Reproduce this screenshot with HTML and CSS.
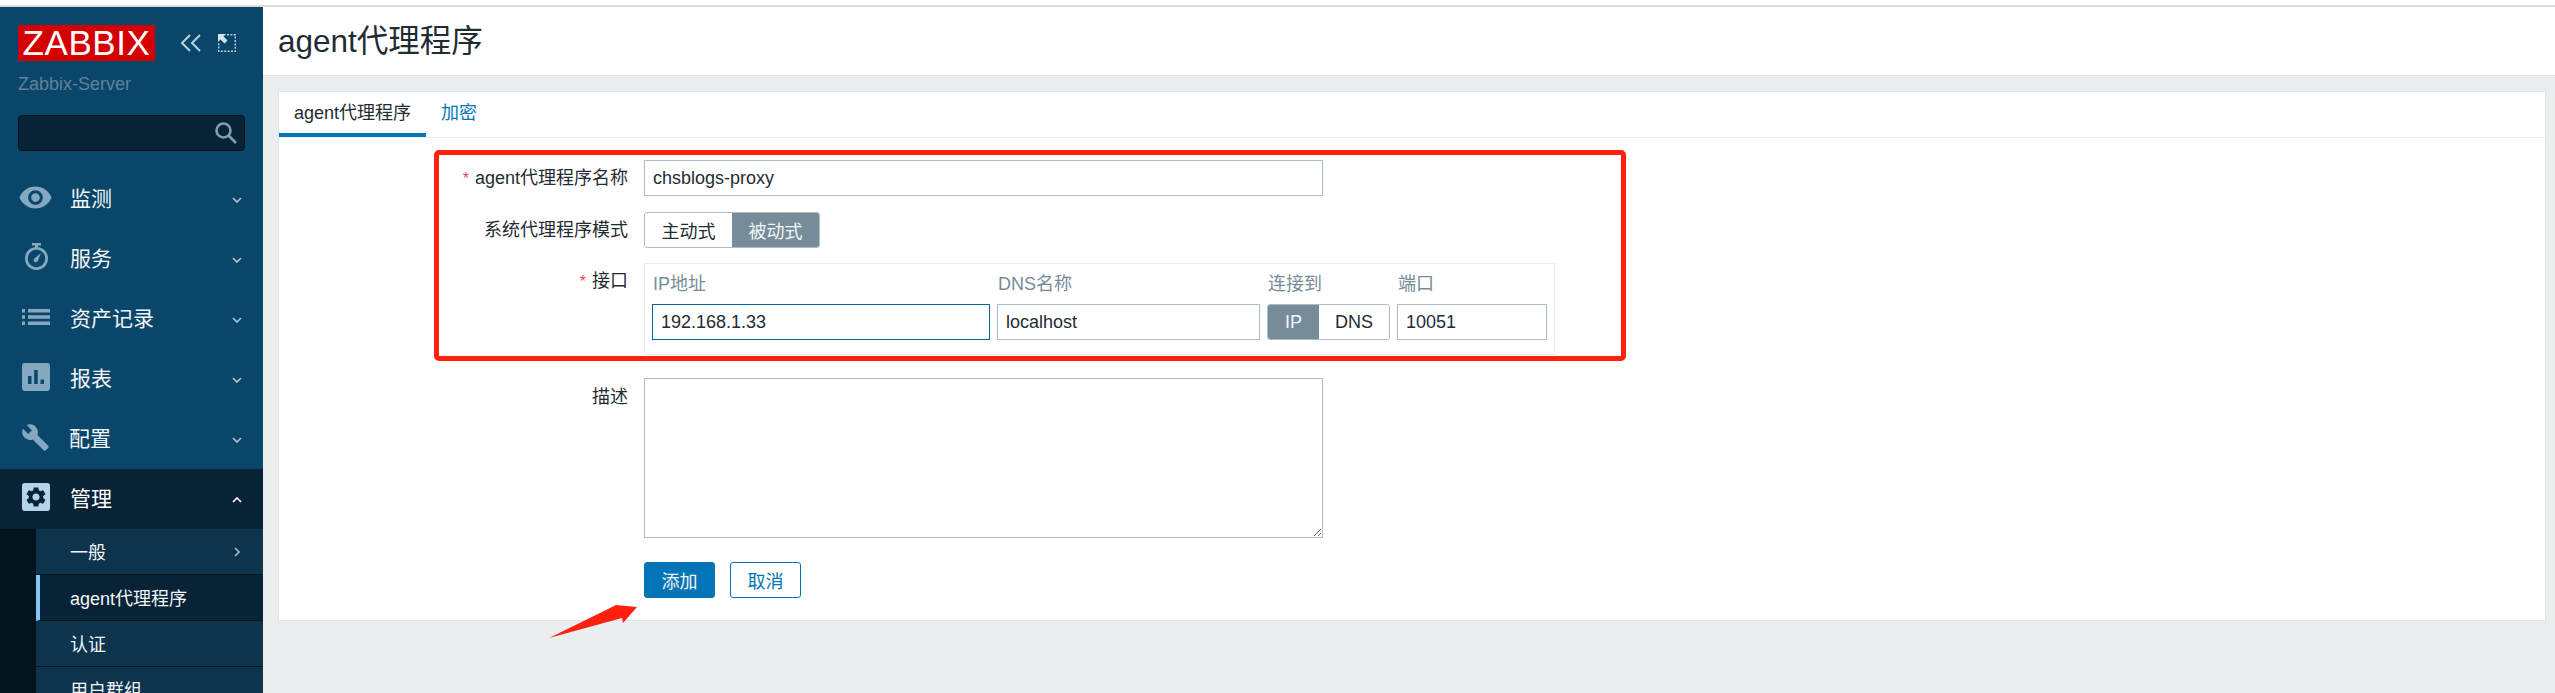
FILE: index.html
```html
<!DOCTYPE html>
<html lang="zh">
<head>
  <meta charset="UTF-8" />
  <title>agent代理程序</title>
  <link rel="stylesheet" href="styles.css">
</head>
<body>
  <div class="topline"></div>
  <div class="layout">

    <aside class="sidebar">
      <div class="brand">
        <span class="logo">ZABBIX</span>
        <svg class="brand-btn collapse" viewBox="0 0 22 18"><path d="M10 1 2 9l8 8M20 1l-8 8 8 8"/></svg>
        <svg class="brand-btn expand" viewBox="0 0 18 18">
          <path class="dots" d="M9 .7h8.300v16.600H.7V9"/>
          <path class="solid" d="M0 0h8L5.500 2.500 9.500 6.500 6.500 9.500 2.500 5.500 0 8z"/>
        </svg>
      </div>
      <div class="server">Zabbix-Server</div>
      <div class="search">
        <svg viewBox="0 0 22 22"><circle cx="8.500" cy="8.500" r="7"/><path d="m13.500 13.500 7.500 7.500"/></svg>
      </div>

      <nav class="menu">
        <a class="menu-item">
          <svg class="icon icon-eye" viewBox="0 0 24 24"><path d="M12 4.500C7 4.500 2.730 7.610 1 12c1.730 4.390 6 7.500 11 7.500s9.270-3.110 11-7.500c-1.730-4.390-6-7.500-11-7.500zM12 17c-2.760 0-5-2.240-5-5s2.240-5 5-5 5 2.240 5 5-2.240 5-5 5zm0-8c-1.660 0-3 1.340-3 3s1.340 3 3 3 3-1.340 3-3-1.340-3-3-3z"/></svg>
          <span>监测</span>
          <svg class="chev" viewBox="0 0 10 6"><path d="m1 1 4 4 4-4"/></svg>
        </a>
        <a class="menu-item">
          <svg class="icon" viewBox="0 0 28 28">
            <path d="M10 0h9v2.500h-3V5h-3V2.500h-3z"/>
            <path fill-rule="evenodd" d="M14.500 4C21 4 26 9 26 15.500S21 27 14.500 27 3 22 3 15.500 8 4 14.500 4zm0 2.800c-4.800 0-8.700 3.900-8.700 8.700s3.900 8.700 8.700 8.700 8.700-3.900 8.700-8.700-3.900-8.700-8.700-8.700z"/>
            <path d="m19 10-3 7.500a2.200 2.200 0 1 1-3-2.500z"/>
          </svg>
          <span>服务</span>
          <svg class="chev" viewBox="0 0 10 6"><path d="m1 1 4 4 4-4"/></svg>
        </a>
        <a class="menu-item">
          <svg class="icon icon-list" viewBox="0 0 28 16"><path d="M0 0h3v3.500H0zM6 0h22v3.500H6zM0 6.250h3v3.500H0zM6 6.250h22v3.500H6zM0 12.500h3V16H0zM6 12.500h22V16H6z"/></svg>
          <span>资产记录</span>
          <svg class="chev" viewBox="0 0 10 6"><path d="m1 1 4 4 4-4"/></svg>
        </a>
        <a class="menu-item">
          <svg class="icon" viewBox="0 0 28 28"><path fill-rule="evenodd" d="M3 0h22a3 3 0 0 1 3 3v22a3 3 0 0 1-3 3H3a3 3 0 0 1-3-3V3a3 3 0 0 1 3-3zm3 13v8h3.500v-8zm6.200-6v14h3.500V7zm6.300 9.500V21H22v-4.500z"/></svg>
          <span>报表</span>
          <svg class="chev" viewBox="0 0 10 6"><path d="m1 1 4 4 4-4"/></svg>
        </a>
        <a class="menu-item">
          <svg class="icon icon-wrench" viewBox="0 0 24 24"><path d="M22.700 19l-9.100-9.100c.9-2.300.4-5-1.500-6.900-2-2-5-2.400-7.400-1.300L9 6 6 9 1.600 4.700C.4 7.100.9 10.100 2.900 12.100c1.900 1.900 4.600 2.400 6.900 1.500l9.100 9.100c.4.4 1 .4 1.400 0l2.300-2.300c.5-.4.5-1.100.1-1.400z"/></svg>
          <span>配置</span>
          <svg class="chev" viewBox="0 0 10 6"><path d="m1 1 4 4 4-4"/></svg>
        </a>
        <a class="menu-item open">
          <span class="gear-box">
            <svg viewBox="0 0 24 24"><path d="M19.140 12.940c.04-.3.06-.61.06-.94 0-.32-.02-.64-.07-.94l2.030-1.580c.18-.14.23-.41.12-.61l-1.920-3.320c-.12-.22-.37-.29-.59-.22l-2.390.96c-.5-.38-1.030-.7-1.620-.94l-.36-2.540c-.04-.24-.24-.41-.48-.41h-3.840c-.24 0-.43.17-.47.41l-.36 2.540c-.59.24-1.130.57-1.620.94l-2.390-.96c-.22-.08-.47 0-.59.22L2.740 8.870c-.12.21-.08.47.12.61l2.030 1.580c-.05.3-.09.63-.09.94s.02.64.07.94l-2.030 1.580c-.18.14-.23.41-.12.61l1.920 3.320c.12.22.37.29.59.22l2.390-.96c.5.38 1.030.7 1.620.94l.36 2.540c.05.24.24.41.48.41h3.840c.24 0 .44-.17.47-.41l.36-2.540c.59-.24 1.130-.56 1.620-.94l2.390.96c.22.08.47 0 .59-.22l1.920-3.320c.12-.22.07-.47-.12-.61l-2.010-1.580zM12 15.600c-1.980 0-3.600-1.620-3.600-3.600s1.620-3.600 3.600-3.600 3.600 1.620 3.600 3.600-1.620 3.600-3.600 3.600z"/></svg>
          </span>
          <span>管理</span>
          <svg class="chev" viewBox="0 0 10 6"><path d="m1 5 4-4 4 4"/></svg>
        </a>
        <div class="submenu">
          <a class="sub-item">一般
            <svg class="chev-right" viewBox="0 0 6 10"><path d="m1 1 4 4-4 4"/></svg>
          </a>
          <a class="sub-item active">agent代理程序</a>
          <a class="sub-item">认证</a>
          <a class="sub-item">用户群组</a>
        </div>
      </nav>
    </aside>

    <main class="main">
      <header class="page-head">
        <h1>agent代理程序</h1>
      </header>

      <section class="card">
        <div class="tabs">
          <a class="tab active">agent代理程序</a>
          <a class="tab">加密</a>
        </div>

        <form class="form">
          <label class="required">agent代理程序名称</label>
          <input class="field wide" type="text" value="chsblogs-proxy">

          <label>系统代理程序模式</label>
          <div class="toggle mode">
            <span class="opt">主动式</span>
            <span class="opt on">被动式</span>
          </div>

          <label class="required">接口</label>
          <div class="iface">
            <span class="iface-head">IP地址</span>
            <span class="iface-head">DNS名称</span>
            <span class="iface-head">连接到</span>
            <span class="iface-head">端口</span>
            <input class="field focus" type="text" value="192.168.1.33">
            <input class="field" type="text" value="localhost">
            <div class="toggle conn">
              <span class="opt on">IP</span>
              <span class="opt">DNS</span>
            </div>
            <input class="field" type="text" value="10051">
          </div>

          <label class="desc-label">描述</label>
          <textarea class="field wide desc"></textarea>

          <span></span>
          <div class="actions">
            <button type="button" class="btn primary">添加</button>
            <button type="button" class="btn">取消</button>
          </div>
        </form>
      </section>

      <div class="mark-box"></div>
      <svg class="mark-arrow" viewBox="0 0 100 45"><path d="M9 38 66 10 76 5 97 7 83 23 82 18z"/></svg>
    </main>

  </div>
</body>
</html>
```

FILE: styles.css
```css
* {
  box-sizing: border-box;
}

html, body {
  height: 100%;
  margin: 0;
  overflow: hidden;
}

body {
  display: flex;
  flex-direction: column;
  font-family: "Liberation Sans", "Noto Sans CJK SC", sans-serif;
  font-size: 18px;
  color: #1f2c33;
  background: #fff;
}

.topline {
  flex: none;
  height: 7px;
  border-bottom: 2px solid #dcdcdc;
}

.layout {
  flex: 1;
  display: flex;
  min-height: 0;
}

/* sidebar */
.sidebar {
  flex: none;
  width: 263px;
  background: #0a466a;
  overflow: hidden;
}

.brand {
  display: flex;
  align-items: center;
  padding: 18px 0 0 18px;
}

.logo {
  width: 137px;
  height: 36px;
  background: #d40000;
  color: #fff;
  font-size: 35px;
  line-height: 36px;
  letter-spacing: 0.6px;
  text-align: center;
}

.brand-btn {
  height: 18px;
  fill: none;
}

.collapse {
  width: 22px;
  margin-left: 25px;
  stroke: #bcd0dd;
  stroke-width: 2;
}

.expand {
  width: 18px;
  margin-left: 16px;
}

.expand .dots {
  fill: none;
  stroke: #bcd0dd;
  stroke-width: 1.4;
  stroke-dasharray: 2 1.400;
}

.expand .solid {
  fill: #d5e2ea;
}

.server {
  margin: 12px 0 0 18px;
  line-height: 22px;
  color: #5f8299;
}

.search {
  display: flex;
  align-items: center;
  justify-content: flex-end;
  width: 227px;
  height: 36px;
  margin: 20px 0 0 18px;
  padding-right: 7px;
  background: #082336;
  border: 1px solid #03121d;
  border-radius: 4px;
}

.search svg {
  width: 22px;
  height: 22px;
  fill: none;
  stroke: #7e9fb3;
  stroke-width: 2.6;
}

.menu {
  margin-top: 18px;
}

.menu-item {
  display: flex;
  align-items: center;
  height: 60px;
  padding: 0 0 4px 20px;
  font-size: 21px;
  color: #f2f5f7;
}

.menu-item .icon {
  flex: none;
  width: 28px;
  height: 28px;
  margin: 0 20px 0 2px;
  fill: #84a8c0;
}

.menu-item .icon-eye {
  width: 35px;
  height: 35px;
  margin: 0 17px 0 -2px;
}

.menu-item .icon-list {
  height: 16px;
}

.menu-item .icon-wrench {
  width: 29px;
  height: 29px;
  margin: 0 19px 0 1px;
}

.menu-item .chev {
  width: 10px;
  height: 6px;
  margin: 6px 21px 0 auto;
  fill: none;
  stroke: #aac2d1;
  stroke-width: 1.700;
}

.menu-item.open {
  background: #082336;
  color: #fff;
}

.menu-item.open .chev {
  stroke: #fff;
}

.gear-box {
  flex: none;
  display: flex;
  align-items: center;
  justify-content: center;
  width: 28px;
  height: 28px;
  margin: 0 20px 0 2px;
  background: #b3d3ea;
  border-radius: 3px;
}

.gear-box svg {
  width: 24px;
  height: 24px;
  fill: #082336;
}

.submenu {
  padding-left: 36px;
  background: #03141f;
}

.sub-item {
  display: flex;
  align-items: center;
  height: 46px;
  padding: 0 0 2px 34px;
  background: #0d334d;
  border-bottom: 1px solid #04161f;
  color: #f2f5f7;
}

.sub-item.active {
  padding-left: 30px;
  background: #082336;
  border-left: 4px solid #82c6f8;
}

.chev-right {
  width: 6px;
  height: 10px;
  margin: 2px 23px 0 auto;
  fill: none;
  stroke: #a3b7c4;
  stroke-width: 1.700;
}

/* page */
.main {
  position: relative;
  flex: 1;
  min-width: 0;
  display: flex;
  flex-direction: column;
  background: #ebeef0;
}

.page-head {
  flex: none;
  height: 69px;
  padding: 0 15px;
  background: #fff;
  border-bottom: 1px solid #dfe4e7;
}

h1 {
  margin: 0;
  font-size: 31.500px;
  font-weight: normal;
  line-height: 68px;
}

.card {
  margin: 15px 9px 0 15px;
  background: #fff;
  border: 1px solid #dfe4e7;
}

.tabs {
  display: flex;
  height: 46px;
  border-bottom: 1px solid #ebeef0;
}

.tab {
  height: 45px;
  padding: 0 15px;
  line-height: 43px;
  color: #0275b8;
}

.tab.active {
  color: #1f2c33;
  border-bottom: 4px solid #0275b8;
}

.form {
  display: grid;
  grid-template-columns: 349px 1fr;
  column-gap: 16px;
  row-gap: 15px;
  padding: 22px 0 22px;
}

.form > label {
  line-height: 36px;
  text-align: right;
}

.form > .desc-label {
  margin-top: 9px;
}

.required::before {
  content: "*";
  margin-right: 6px;
  color: #e8504a;
  font-size: 16px;
}

.field {
  height: 36px;
  min-width: 0;
  padding: 0 8px;
  background: #fff;
  border: 1px solid #acbbc5;
  border-radius: 0;
  font: inherit;
  color: #1f2c33;
  outline: none;
}

.field.wide {
  width: 679px;
}

.field.focus {
  border-color: #00689f;
}

.desc {
  display: block;
  height: 160px;
  margin-top: 8px;
}

.toggle {
  display: flex;
  height: 36px;
  background: #fff;
  border: 1px solid #acbbc5;
  border-radius: 3px;
  overflow: hidden;
}

.mode {
  width: 176px;
}

.opt {
  display: flex;
  align-items: center;
  justify-content: center;
  flex: 1;
}

.opt.on {
  background: #768d99;
  color: #f2f5f7;
}

.conn .opt:first-child {
  flex: none;
  width: 51px;
}

.iface {
  display: grid;
  grid-template-columns: 338px 263px 123px 150px;
  column-gap: 7px;
  align-items: end;
  width: 911px;
  height: 92px;
  padding: 10px 7px 14px;
  border: 1px solid #ebeef0;
}

.iface-head {
  height: 20px;
  margin-bottom: 10px;
  padding-left: 1px;
  line-height: 20px;
  color: #768d99;
}

.actions {
  display: flex;
  gap: 15px;
  margin-top: 9px;
}

.btn {
  width: 71px;
  height: 36px;
  padding: 0;
  background: #fff;
  border: 1px solid #0275b8;
  border-radius: 3px;
  font: inherit;
  color: #0275b8;
}

.btn.primary {
  background: #0275b8;
  color: #f2f5f7;
}

/* red annotations over the screenshot */
.mark-box {
  position: absolute;
  left: 171px;
  top: 143px;
  width: 1192px;
  height: 211px;
  border: 5px solid #ff2010;
  border-radius: 5px;
}

.mark-arrow {
  position: absolute;
  left: 277px;
  top: 593px;
  width: 100px;
  height: 45px;
  fill: #ff2010;
}
```
